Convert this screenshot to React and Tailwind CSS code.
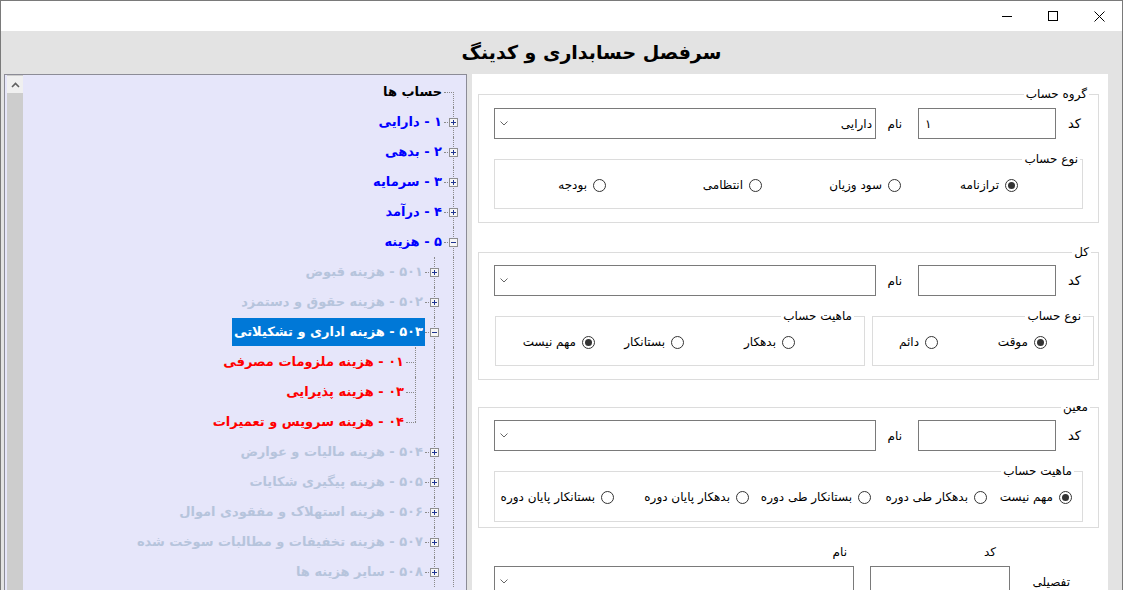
import React from "react";

// گره‌های درخت حساب‌ها؛ cells از راست به چپ خطوط اتصال هر سطر را مشخص می‌کند
const treeRows = [
  { text: "حساب ها", cells: ["root"], tone: "root" },
  { text: "۱ - دارایی", cells: ["plus"], tone: "top" },
  { text: "۲ - بدهی", cells: ["plus"], tone: "top" },
  { text: "۳ - سرمایه", cells: ["plus"], tone: "top" },
  { text: "۴ - درآمد", cells: ["plus"], tone: "top" },
  { text: "۵ - هزینه", cells: ["minus"], tone: "top" },
  { text: "۵۰۱ - هزینه قبوض", cells: ["line", "plus"], tone: "sub" },
  { text: "۵۰۲ - هزینه حقوق و دستمزد", cells: ["line", "plus"], tone: "sub" },
  { text: "۵۰۳ - هزینه اداری و تشکیلاتی", cells: ["line", "minus"], tone: "sub", selected: true },
  { text: "۰۱ - هزینه ملزومات مصرفی", cells: ["line", "line", "tee"], tone: "leaf" },
  { text: "۰۳ - هزینه پذیرایی", cells: ["line", "line", "tee"], tone: "leaf" },
  { text: "۰۴ - هزینه سرویس و تعمیرات", cells: ["line", "line", "end"], tone: "leaf" },
  { text: "۵۰۴ - هزینه مالیات و عوارض", cells: ["line", "plus"], tone: "sub" },
  { text: "۵۰۵ - هزینه پیگیری شکایات", cells: ["line", "plus"], tone: "sub" },
  { text: "۵۰۶ - هزینه استهلاک و مفقودی اموال", cells: ["line", "plus"], tone: "sub" },
  { text: "۵۰۷ - هزینه تخفیفات و مطالبات سوخت شده", cells: ["line", "plus"], tone: "sub" },
  { text: "۵۰۸ - سایر هزینه ها", cells: ["line", "plus"], tone: "sub" },
];

const toneClass = {
  root: "text-black",
  top: "text-[#0000ff]",
  sub: "text-[#b6c4dc]",
  leaf: "text-[#ff0000]",
};

function ExpandBox({ open }) {
  return (
    <svg width="9" height="9" viewBox="0 0 9 9" className="absolute left-[5px] top-[11px]">
      <rect x="0.5" y="0.5" width="8" height="8" fill="#f6f6f6" stroke="#8f8f8f" />
      <path d={open ? "M2 4.5h5" : "M2 4.5h5M4.5 2v5"} stroke="#1f3590" strokeWidth="1" />
    </svg>
  );
}

function Connector({ kind }) {
  const vFull = kind === "line" || kind === "tee" || kind === "plus" || kind === "minus";
  const hLine = kind !== "line";
  return (
    <div className="relative w-[19px] h-[30px] shrink-0">
      {vFull && <div className="absolute left-[9px] top-0 bottom-0 border-l border-dotted border-[#8a8a8a]" />}
      {kind === "end" && <div className="absolute left-[9px] top-0 h-[15px] border-l border-dotted border-[#8a8a8a]" />}
      {kind === "root" && <div className="absolute left-[9px] top-[15px] bottom-0 border-l border-dotted border-[#8a8a8a]" />}
      {hLine && <div className="absolute left-0 w-[10px] top-[15px] border-t border-dotted border-[#8a8a8a]" />}
      {(kind === "plus" || kind === "minus") && <ExpandBox open={kind === "minus"} />}
    </div>
  );
}

function Tree() {
  return (
    <div className="w-[463px] h-[540px] shrink-0 flex border border-[#8c8c96] bg-[#e6e6fa]">
      <div className="ml-[2px] w-[16px] bg-[#cdcdcd] flex flex-col">
        <div className="mt-px h-[17px] bg-[#f0f0f0] flex items-center justify-center">
          <svg width="9" height="6" viewBox="0 0 9 6">
            <path d="M1 5L4.5 1.5L8 5" fill="none" stroke="#606060" strokeWidth="1.6" />
          </svg>
        </div>
      </div>
      <div dir="rtl" className="flex-1 pt-[2px] pr-[3px]">
        {treeRows.map((row) => (
          <div key={row.text} className="flex items-center h-[30px]">
            {row.cells.map((c, i) => (
              <Connector key={i} kind={c} />
            ))}
            <span
              className={
                "h-[28px] px-[2px] flex items-center whitespace-nowrap text-[13px] font-bold " +
                (row.selected ? "bg-[#0078d7] text-white" : toneClass[row.tone])
              }
            >
              {row.text}
            </span>
          </div>
        ))}
      </div>
    </div>
  );
}

function Chevron() {
  return (
    <svg width="8" height="5" viewBox="0 0 8 5">
      <path d="M0.5 0.5L4 4L7.5 0.5" fill="none" stroke="#666" strokeWidth="1" />
    </svg>
  );
}

function Combo({ value, w }) {
  return (
    <div className={"h-[31px] border border-[#7a7a7a] bg-white flex items-center justify-between pr-[3px] pl-[5px] shrink-0 " + w}>
      <span className="text-[12px]">{value}</span>
      <Chevron />
    </div>
  );
}

function TextBox({ value, w }) {
  return (
    <div dir="ltr" className={"h-[31px] border border-[#7a7a7a] bg-white flex items-center pl-[6px] shrink-0 text-[12px] " + w}>
      {value}
    </div>
  );
}

function Radio({ label, checked, w }) {
  return (
    <div className={"flex items-center gap-[6px] h-[20px] shrink-0 " + (w || "")}>
      <span className="w-[13px] h-[13px] rounded-full border border-[#333] bg-white flex items-center justify-center shrink-0">
        {checked && <span className="w-[7px] h-[7px] rounded-full bg-[#333]" />}
      </span>
      <span className="text-[12px] whitespace-nowrap">{label}</span>
    </div>
  );
}

function Box({ title, legendGap, className, children }) {
  return (
    <fieldset className={"border border-[#dcdcdc] " + (className || "")}>
      <legend className={"px-[2px] text-[12px] leading-[16px] " + legendGap}>{title}</legend>
      {children}
    </fieldset>
  );
}

function CodeNameRow({ code, name }) {
  return (
    <div className="flex items-center pr-[17px]">
      <span className="w-[25px] text-[13px] text-right shrink-0">کد</span>
      <TextBox value={code} w="w-[138px]" />
      <span className="w-[42px] pr-[16px] text-[12px] shrink-0">نام</span>
      <Combo value={name} w="w-[382px]" />
    </div>
  );
}

function Form() {
  return (
    <div dir="rtl" className="w-[636px] h-[540px] shrink-0 bg-white pt-[12px] pl-[6px] pr-[9px] text-black">
      {/* گروه حساب */}
      <Box title="گروه حساب" legendGap="mr-[9px]" className="pb-[13px]">
        <div className="mt-[6px]">
          <CodeNameRow code="۱" name="دارایی" />
        </div>
        <Box title="نوع حساب" legendGap="mr-[2px]" className="mt-[12px] mr-[15px] ml-[15px]">
          <div className="h-[41px] pt-[8px] flex pr-[64px]">
            <Radio label="ترازنامه" checked w="w-[117px]" />
            <Radio label="سود وزیان" w="w-[139px]" />
            <Radio label="انتظامی" w="w-[156px]" />
            <Radio label="بودجه" />
          </div>
        </Box>
      </Box>

      {/* کل */}
      <Box title="کل" legendGap="mr-[7px]" className="mt-[21px] pb-[13px]">
        <div className="mt-[5px]">
          <CodeNameRow code="" name="" />
        </div>
        <div className="mt-[12px] flex gap-[7px] mr-[4px] ml-[16px]">
          <Box title="نوع حساب" legendGap="mr-[10px]" className="w-[222px] shrink-0">
            <div className="h-[41px] pt-[8px] flex pr-[46px]">
              <Radio label="موقت" checked w="w-[109px]" />
              <Radio label="دائم" />
            </div>
          </Box>
          <Box title="ماهیت حساب" legendGap="mr-[10px]" className="w-[370px] shrink-0">
            <div className="h-[41px] pt-[8px] flex pr-[69px]">
              <Radio label="بدهکار" w="w-[111px]" />
              <Radio label="بستانکار" w="w-[89px]" />
              <Radio label="مهم نیست" checked />
            </div>
          </Box>
        </div>
      </Box>

      {/* معین */}
      <Box title="معین" legendGap="mr-[8px]" className="mt-[19px] pb-[5px]">
        <div className="mt-[5px]">
          <CodeNameRow code="" name="" />
        </div>
        <Box title="ماهیت حساب" legendGap="mr-[8px]" className="mt-[12px] mr-[15px] ml-[15px]">
          <div className="h-[42px] pt-[8px] flex pr-[10px]">
            <Radio label="مهم نیست" checked w="w-[85px]" />
            <Radio label="بدهکار طی دوره" w="w-[116px]" />
            <Radio label="بستانکار طی دوره" w="w-[122px]" />
            <Radio label="بدهکار پایان دوره" w="w-[135px]" />
            <Radio label="بستانکار پایان دوره" />
          </div>
        </Box>
      </Box>

      {/* تفصیلی */}
      <div className="mt-[16px] flex pr-[103px] text-[12px] leading-[16px]">
        <span className="w-[149px] shrink-0">کد</span>
        <span>نام</span>
      </div>
      <div className="mt-[6px] flex items-center pr-[29px]">
        <span className="w-[60px] shrink-0 text-[12px]">تفصیلی</span>
        <TextBox value="" w="w-[140px]" />
        <div className="w-[16px] shrink-0" />
        <Combo value="" w="w-[360px]" />
      </div>
    </div>
  );
}

function WinButton({ children }) {
  return <div className="w-[46px] h-full flex items-center justify-center">{children}</div>;
}

export default function App() {
  return (
    <div className="w-[1123px] h-[590px] overflow-hidden flex flex-col bg-[#e3e3e3] border-t border-l border-r border-[#7a7a7a] font-['DejaVu_Sans',sans-serif]">
      <div className="h-[30px] shrink-0 bg-white flex justify-end">
        <WinButton>
          <svg width="10" height="10" viewBox="0 0 10 10">
            <path d="M0 5.5h10" stroke="#000" strokeWidth="1" />
          </svg>
        </WinButton>
        <WinButton>
          <svg width="10" height="10" viewBox="0 0 10 10">
            <rect x="0.5" y="0.5" width="9" height="9" fill="none" stroke="#000" strokeWidth="1" />
          </svg>
        </WinButton>
        <WinButton>
          <svg width="11" height="11" viewBox="0 0 11 11">
            <path d="M0.5 0.5L10.5 10.5M10.5 0.5L0.5 10.5" stroke="#000" strokeWidth="1" />
          </svg>
        </WinButton>
      </div>
      <div className="h-[43px] shrink-0 flex items-center justify-center pl-[60px]">
        <h1 dir="rtl" className="text-[19px] font-bold text-black">سرفصل حسابداری و کدینگ</h1>
      </div>
      <div className="flex-1 min-h-0 flex items-start pl-[3px] gap-[5px]">
        <Tree />
        <Form />
      </div>
    </div>
  );
}
